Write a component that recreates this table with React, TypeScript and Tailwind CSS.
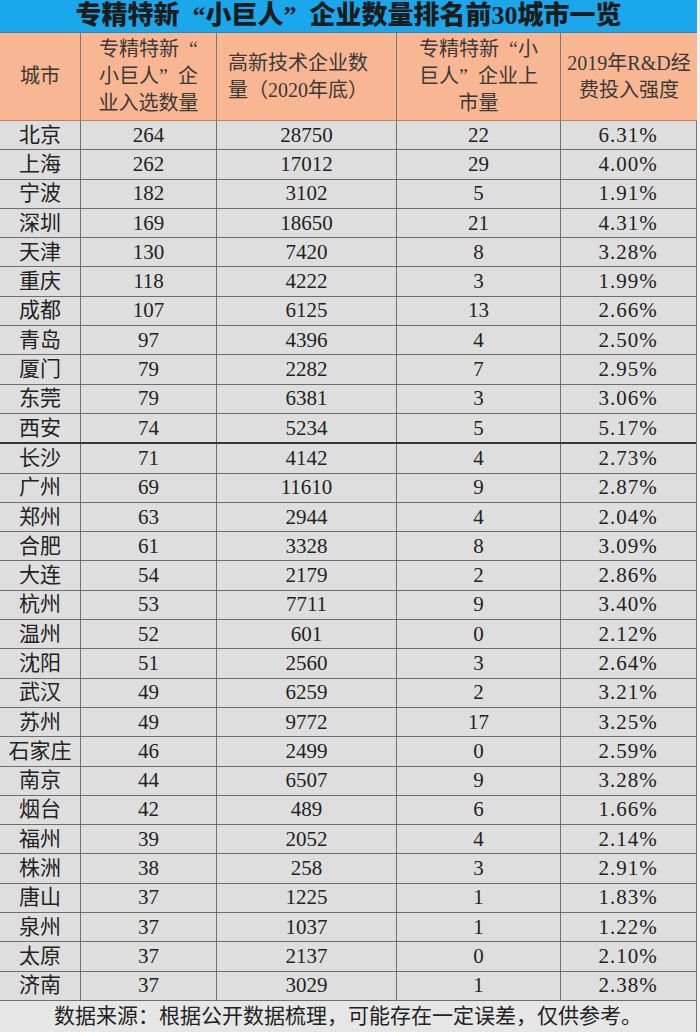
const rows: [string, string, string, string, string][] = [
  ["北京", "264", "28750", "22", "6.31%"],
  ["上海", "262", "17012", "29", "4.00%"],
  ["宁波", "182", "3102", "5", "1.91%"],
  ["深圳", "169", "18650", "21", "4.31%"],
  ["天津", "130", "7420", "8", "3.28%"],
  ["重庆", "118", "4222", "3", "1.99%"],
  ["成都", "107", "6125", "13", "2.66%"],
  ["青岛", "97", "4396", "4", "2.50%"],
  ["厦门", "79", "2282", "7", "2.95%"],
  ["东莞", "79", "6381", "3", "3.06%"],
  ["西安", "74", "5234", "5", "5.17%"],
  ["长沙", "71", "4142", "4", "2.73%"],
  ["广州", "69", "11610", "9", "2.87%"],
  ["郑州", "63", "2944", "4", "2.04%"],
  ["合肥", "61", "3328", "8", "3.09%"],
  ["大连", "54", "2179", "2", "2.86%"],
  ["杭州", "53", "7711", "9", "3.40%"],
  ["温州", "52", "601", "0", "2.12%"],
  ["沈阳", "51", "2560", "3", "2.64%"],
  ["武汉", "49", "6259", "2", "3.21%"],
  ["苏州", "49", "9772", "17", "3.25%"],
  ["石家庄", "46", "2499", "0", "2.59%"],
  ["南京", "44", "6507", "9", "3.28%"],
  ["烟台", "42", "489", "6", "1.66%"],
  ["福州", "39", "2052", "4", "2.14%"],
  ["株洲", "38", "258", "3", "2.91%"],
  ["唐山", "37", "1225", "1", "1.83%"],
  ["泉州", "37", "1037", "1", "1.22%"],
  ["太原", "37", "2137", "0", "2.10%"],
  ["济南", "37", "3029", "1", "2.38%"],
]

const font = { fontFamily: '"Liberation Serif", "Noto Sans CJK SC", serif' }

// quote marks padded out to a full-width cell, as CJK fonts draw them
const Open = () => <span className="pl-[0.5em]">“</span>
const Close = () => <span className="pr-[0.5em]">”</span>

export default function App() {
  return (
    <div className="w-[700px] h-[1032px] bg-[#f2f2f2] overflow-hidden text-[#222]" style={font}>
      <div className="w-[697px]">
        {/* Title */}
        <div className="h-[33px] bg-[#1ba7ec] border-b border-[#3a7fa8] flex items-center justify-center">
          <span className="text-[26px] font-black text-[#1c1c1c] leading-[30px]">
            专精特新<Open />小巨人<Close />企业数量排名前30城市一览
          </span>
        </div>

        {/* Header */}
        <div className="h-[88px] bg-[#f8b692] grid grid-cols-[81px_136px_180px_164px_136px] border-b border-[#c77d5a] text-[20px] leading-[27px] text-[#3a3a3a]">
          <div className="border-r border-[#777] flex items-center justify-center">城市</div>
          <div className="border-r border-[#777] flex items-center justify-center text-center">
            <span>专精特新<Open /><br />小巨人<Close />企<br />业入选数量</span>
          </div>
          <div className="border-r border-[#777] flex items-center pl-[11px]">
            <span>高新技术企业数<br />量（2020年底）</span>
          </div>
          <div className="border-r border-[#777] flex items-center justify-center text-center">
            <span>专精特新<Open />小<br />巨人<Close />企业上<br />市量</span>
          </div>
          <div className="flex items-center justify-center text-center">
            <span>2019年R&amp;D经<br />费投入强度</span>
          </div>
        </div>

        {/* Body */}
        <div className="h-[880px] flex flex-col bg-[#dfdedf] border-r border-[#777]">
          {rows.map((r, i) => (
            <div
              key={i}
              className={
                "flex-1 grid grid-cols-[81px_136px_180px_164px_136px] text-[21px] leading-none " +
                (i === 10 ? "border-b-2 border-[#333]" : "border-b border-[#6e6e6e]")
              }
            >
              <div className="border-r border-[#6e6e6e] flex items-center justify-center">{r[0]}</div>
              <div className="border-r border-[#6e6e6e] flex items-center justify-center">{r[1]}</div>
              <div className="border-r border-[#6e6e6e] flex items-center justify-center">{r[2]}</div>
              <div className="border-r border-[#6e6e6e] flex items-center justify-center">{r[3]}</div>
              <div className="flex items-center justify-center tracking-[1px] pr-[2px]">{r[4]}</div>
            </div>
          ))}
        </div>

        {/* Footer */}
        <div className="h-[31px] bg-[#e6e6e6] border-r border-[#777] flex items-center justify-center text-[21px] leading-none text-[#222]">
          数据来源：根据公开数据梳理，可能存在一定误差，仅供参考。
        </div>
      </div>
    </div>
  )
}
